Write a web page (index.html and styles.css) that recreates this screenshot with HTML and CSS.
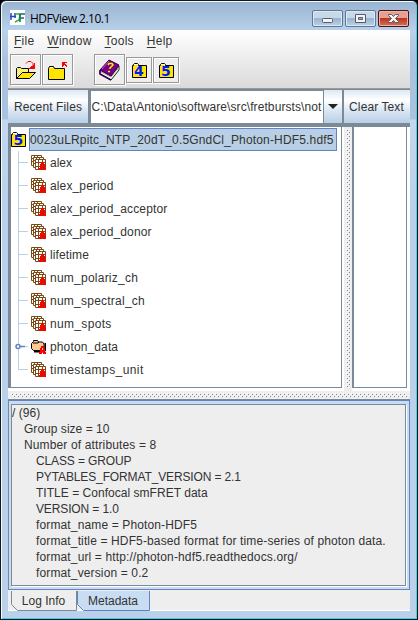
FILE: index.html
```html
<!DOCTYPE html>
<html lang="en">
<head>
<meta charset="utf-8">
<title>HDFView 2.10.1</title>
<link rel="stylesheet" href="styles.css">
</head>
<body>
<svg class="defs" width="0" height="0">
  <defs>
    <pattern id="check" width="2" height="2" patternUnits="userSpaceOnUse"><rect width="2" height="2" fill="#fff"/><path d="M0 0h1v1H0zM1 1h1v1H1z" fill="#ffe500"/></pattern>
    <pattern id="dots-h" width="4" height="4" patternUnits="userSpaceOnUse"><path d="M0 0h1v1H0zM2 2h1v1H2z" fill="#fff"/><path d="M1 1h1v1H1zM3 3h1v1H3z" fill="#7a8a99"/></pattern>
    <symbol id="badge" viewBox="0 0 7 8"><path fill-rule="evenodd" d="M2 0h3v2h1v4h1v2H4V6H3v2H0V6h1V2h1zM3 2v2h1V2z" fill="#f00"/></symbol>
    <symbol id="dataset" viewBox="0 0 15 15">
      <g fill="#fff" stroke="#7b4a12">
        <path d="M.5.5h10v10H.5zM3.5.5v10M6.5.5v10M.5 3.5h10M.5 6.5h10"/>
        <path d="M2.500 2.500h10v10h-10zM5.500 2.500v10M8.500 2.500v10M2.500 5.500h10M2.500 8.500h10"/>
        <path d="M4.500 4.500h10v10h-10zM7.500 4.500v10M11.500 4.500v10M4.500 7.500h10M4.500 11.500h10"/>
      </g>
      <use href="#badge" x="8" y="7" width="7" height="8"/>
    </symbol>
    <symbol id="folder" viewBox="0 0 15 15">
      <path d="M.5 14.500V2.500H1.500V1.500L2.500 .500H5.500L6.500 1.500V2.500H14.500V14.500z" fill="#ffe500" stroke="#000"/>
      <path d="M2 2V1h4v1z" fill="#fff"/>
    </symbol>
  </defs>
</svg>
<div class="window">
  <header class="titlebar">
    <svg class="logo" width="15" height="15"><path fill="#fff" d="M0 0h15v15H0z"/><path d="M1 3v7M0 6.500h6M5 3v5" stroke="#2747c7" stroke-width="1.500" fill="none"/><path d="M5 4h4l1 2-1 4-4 2" stroke="#2db53b" stroke-width="1.500" fill="none"/><path d="M10 12V4h5M10 8h4" stroke="#1d6b62" stroke-width="1.500" fill="none"/></svg>
    <h1>HDFView 2.10.1</h1>
    <div class="controls">
      <span class="control"><svg width="29" height="15"><rect x="9.500" y="7.500" width="10" height="4" rx="1" fill="#f4f4f4" stroke="#555b68"/></svg></span>
      <span class="control"><svg width="29" height="15"><path fill-rule="evenodd" d="M9.500 3.500h10v8h-10zM12.500 6.500v2h4v-2z" fill="#f4f4f4" stroke="#555b68"/></svg></span>
      <span class="control close"><svg width="29" height="15"><path d="M9.500 3.500h3l2 2 2-2h3v1l-3 3 3 3v1h-3l-2-2-2 2h-3v-1l3-3-3-3z" fill="#f4f4f4" stroke="#555b68"/></svg></span>
    </div>
  </header>
  <main class="client">
    <div class="top">
      <nav class="menu"><span><u>F</u>ile</span><span><u>W</u>indow</span><span><u>T</u>ools</span><span><u>H</u>elp</span></nav>
      <div class="toolbar">
        <span class="tool"><svg width="29" height="29">
          <path d="M5.500 23.500V13.500L6.500 12.500H9.500L10.500 13.500H17.500V17.500H11.500L5.500 23.500" fill="url(#check)" stroke="#000"/>
          <path d="M5.500 23.500L11.500 17.500H24.500L18.500 23.500z" fill="#ffe500" stroke="#000"/>
          <path d="M15 8.500l2-2h3l2 2v3" fill="none" stroke="#f00"/><path d="M24 8v6h-6v-1h1v-1h1v-1h2v-1h1V8z" fill="#f00"/></svg></span>
        <span class="tool"><svg width="29" height="29">
          <path d="M5.500 24.500V13.500L6.500 11.500H10.500L11.500 13.500H21.500V24.500z" fill="#ffe500" stroke="#000"/><path d="M7 12h3v1H7z" fill="#fff"/>
          <path d="M19 7h5v1h-2v1h1v1h1v1h-2v-1h-1v1h-1v1h-1z" fill="#f00"/><path d="M23.500 10v2" stroke="#f00"/></svg></span>
        <span class="tool help"><svg width="29" height="29">
          <path d="M5 15l11 6 8-10v4l-8 10L5 19z" fill="#fff" stroke="#222"/><path d="M6 17l10 5 7-8" fill="none" stroke="#aaa"/>
          <path d="M5 15L14 5l10 5-8 11z" fill="#770087" stroke="#330044"/><path d="M5 15v4l11 6" fill="none" stroke="#330044" stroke-width="1.500"/><path d="M7 14l7-8" stroke="#b45dba"/>
          <path d="M13 10l1-1.500h3l1 1.500-3 3v1M13 16.500h2" fill="none" stroke="#fff000" stroke-width="1.500"/></svg></span>
        <span class="tool small"><svg width="24" height="24"><use href="#folder" x="5" y="5" width="15" height="15"/><text class="digit" x="7" y="18">4</text></svg></span>
        <span class="tool small"><svg width="24" height="24"><use href="#folder" x="5" y="5" width="15" height="15"/><text class="digit" x="7" y="18">5</text></svg></span>
      </div>
    </div>
    <div class="filebar">
      <div class="button recent"><span>Recent Files</span></div>
      <div class="path"><span>C:\Data\Antonio\software\src\fretbursts\not</span></div>
      <div class="button drop"><svg width="10" height="5"><path d="M0 0h10L5 5z" fill="#222"/></svg></div>
      <div class="button clear"><span>Clear Text</span></div>
    </div>
    <div class="workspace">
      <section class="tree">
        <div class="root"><svg width="15" height="15"><use href="#folder" width="15" height="15"/><text class="digit" x="2.500" y="13">5</text></svg><span class="selected">0023uLRpitc_NTP_20dT_0.5GndCl_Photon-HDF5.hdf5</span></div>
        <ul>
          <li><svg width="15" height="15"><use href="#dataset"/></svg><span class="snug">alex</span></li>
          <li><svg width="15" height="15"><use href="#dataset"/></svg><span>alex_period</span></li>
          <li><svg width="15" height="15"><use href="#dataset"/></svg><span>alex_period_acceptor</span></li>
          <li><svg width="15" height="15"><use href="#dataset"/></svg><span>alex_period_donor</span></li>
          <li><svg width="15" height="15"><use href="#dataset"/></svg><span>lifetime</span></li>
          <li><svg width="15" height="15"><use href="#dataset"/></svg><span class="wide">num_polariz_ch</span></li>
          <li><svg width="15" height="15"><use href="#dataset"/></svg><span class="wide">num_spectral_ch</span></li>
          <li><svg width="15" height="15"><use href="#dataset"/></svg><span class="wider">num_spots</span></li>
          <li class="group"><svg class="handle" width="10" height="7"><circle cx="3" cy="3.500" r="2" fill="#fff" stroke="#6382bf" stroke-width="1.500"/><path d="M5 3.500h5" stroke="#6382bf" stroke-width="1.500"/></svg><svg width="15" height="15"><path d="M3 12.500h10l1.500-2V4" fill="none" stroke="#000" stroke-width="2"/><path d="M.5 9.500v-5l2-2v-1h4l1 1.500h4l1.500 2v5l-1.500 1.500h-9z" fill="#ffc993" stroke="#000"/><path d="M2 4h5l1-1" stroke="#000" fill="none"/><use href="#badge" x="8" y="7" width="7" height="8"/></svg><span>photon_data</span></li>
          <li><svg width="15" height="15"><use href="#dataset"/></svg><span class="widest">timestamps_unit</span></li>
        </ul>
      </section>
      <div class="split-v"><svg width="4" height="258"><rect width="4" height="258" fill="url(#dots-h)"/></svg></div>
      <section class="desktop"></section>
    </div>
    <div class="split-h"><svg width="396" height="4"><rect width="396" height="4" fill="url(#dots-h)"/></svg></div>
    <section class="info">
      <div class="meta">
        <p>/ (96)</p>
        <p class="in1">Group size = 10</p>
        <p class="in1 lower">Number of attributes = 8</p>
        <p class="in2 upper">CLASS = GROUP</p>
        <p class="in2 upper">PYTABLES_FORMAT_VERSION = 2.1</p>
        <p class="in2">TITLE = Confocal smFRET data</p>
        <p class="in2 upper">VERSION = 1.0</p>
        <p class="in2 lower">format_name = Photon-HDF5</p>
        <p class="in2 lower">format_title = HDF5-based format for time-series of photon data.</p>
        <p class="in2 lower">format_url = http://photon-hdf5.readthedocs.org/</p>
        <p class="in2 lower">format_version = 0.2</p>
      </div>
    </section>
    <footer class="tabs">
      <div class="tab log"><svg width="66" height="20"><path d="M.5 0v13.500l6 6h59V0" fill="#eee" stroke="#7a8a99"/></svg><span>Log Info</span></div>
      <div class="tab active"><svg width="73" height="20"><path d="M.5 0v13.500l6 6h66V0" fill="#c8ddf2" stroke="#6382bf"/></svg><span>Metadata</span></div>
    </footer>
  </main>
</div>
</body>
</html>
```
FILE: styles.css
```css
* { box-sizing: border-box; }
body { margin: 0; background: #000; color: #333; font: 12px/16px "Liberation Sans", Arial, sans-serif; overflow: hidden; }
svg { display: block; flex: none; }
.defs { position: absolute; }
span, p, h1 { white-space: pre; }
.window { width: 418px; height: 620px; border: 1px solid #101820; border-radius: 6px 6px 0 0; background: linear-gradient(#99b4d1, #b9d1ea 30px, #a9c3df 60px, #a9c3df 118px, #c3d8ee 119px, #b9d1ea 200px); box-shadow: inset 1px 1px #f5fbff, inset -1px -1px #36d3ee; padding: 0 7px 8px; }
.titlebar { height: 29px; display: flex; align-items: flex-start; padding: 9px 1px 0 2px; }
.titlebar h1 { margin: 0 0 0 5px; font: 12px/17px "Open Sans", sans-serif; letter-spacing: -.5px; color: #000; }
.controls { margin-left: auto; display: flex; gap: 2px; }
.control { width: 31px; height: 17px; border: 1px solid #5f7896; border-radius: 2px; background: linear-gradient(#c7d8e9 48%, #9ab4cf 50%, #b9d0e7); box-shadow: inset 0 0 0 1px #dce8f4; }
.close { border-color: #4d1119; background: linear-gradient(#e5a092 48%, #b9361d 50%, #d2735c); box-shadow: inset 0 0 0 1px #eab4a6; }
.client { width: 402px; height: 581px; background: #eee; border-bottom: 1px solid #fff; }
.top { height: 59px; background: linear-gradient(#fff, #dadada); border-bottom: 1px solid #999; }
.menu { height: 24px; display: flex; padding: 3px 6px 0; gap: 13px; letter-spacing: .25px; }
.menu u { text-underline-offset: 2px; }
.toolbar { display: flex; gap: 1px; align-items: center; padding-left: 2px; height: 31px; }
.tool { width: 31px; height: 31px; border: 1px solid #999; box-shadow: 1px 1px #fff, inset 1px 1px #fff; background: #eee; }
.help { margin-left: 20px; }
.small { width: 26px; height: 26px; }
.digit { font: bold 14px "DejaVu Sans", sans-serif; fill: #0018ff; }
.filebar { height: 35px; display: flex; background: #7a8a99; padding: 1px 0; }
.button { display: flex; align-items: center; justify-content: center; background: linear-gradient(#dde8f3, #fff 30%, #dde8f3 60%, #b8cfe5); }
.recent { width: 80px; margin-right: 3px; letter-spacing: .12px; }
.path { width: 232px; height: 32px; margin-top: 1px; background: #fff; display: flex; align-items: center; padding-left: .5px; margin-right: 1px; overflow: hidden; letter-spacing: .09px; }
.drop { width: 18px; margin-right: 2px; }
.clear { width: 66px; padding-right: 1px; letter-spacing: .1px; }
.workspace { height: 267px; display: flex; border-top: 3px solid #7a8a99; background: #fff; }
.tree { width: 334px; height: 261px; border: solid #7a8a99; border-width: 0 1px 1px 3px; padding-top: 1px; }
.root { height: 23px; display: flex; align-items: center; }
.selected { width: 308px; height: 23px; margin-left: 3px; border: 1px solid #6382bf; background: #b8cfe5; padding: 3px 0; line-height: 16px; letter-spacing: .16px; }
.tree ul { list-style: none; margin: 0 0 0 7px; padding: 0; background: linear-gradient(#b8cfe5, #b8cfe5) 0 0 / 1px 219px no-repeat; letter-spacing: .13px; }
.tree li { height: 23px; display: flex; align-items: center; gap: 4px; padding-left: 13px; background: linear-gradient(#b8cfe5, #b8cfe5) 0 11px / 10px 1px no-repeat; }
.tree .snug { letter-spacing: 0; }
.tree .wide { letter-spacing: .24px; }
.tree .wider { letter-spacing: .33px; }
.tree .widest { letter-spacing: .42px; }
.group { position: relative; }
.handle { position: absolute; left: -3px; top: 8px; }
.split-v { width: 8px; height: 264px; margin-left: 2px; background: #eee; padding: 2px; }
.desktop { width: 55px; height: 261px; border: solid #7a8a99; border-width: 0 1px 1px 2px; }
.split-h { height: 8px; padding: 2px 3px; background: #eee; }
.info { height: 191px; border: 1px solid #6382bf; border-top-color: #7a8a99; border-left-color: #7a8a99; background: #c8ddf2; padding: 4px 3px 3px 2px; box-shadow: inset 0 1px #6382bf; }
.meta { height: 182px; border: 1px solid #7a8a99; background: #eee; box-shadow: 1px 1px #fff; }
.meta p { margin: 0; height: 16px; letter-spacing: .03px; }
.meta .in1 { padding-left: 12px; }
.meta .in2 { padding-left: 24px; }
.meta .lower { letter-spacing: .135px; }
.meta .upper { letter-spacing: -.13px; }
.tabs { height: 21px; display: flex; padding-left: 3px; }
.tab { display: grid; place-items: center; }
.tab > * { grid-area: 1 / 1; }
.tab span { margin-right: 1px; }
```
